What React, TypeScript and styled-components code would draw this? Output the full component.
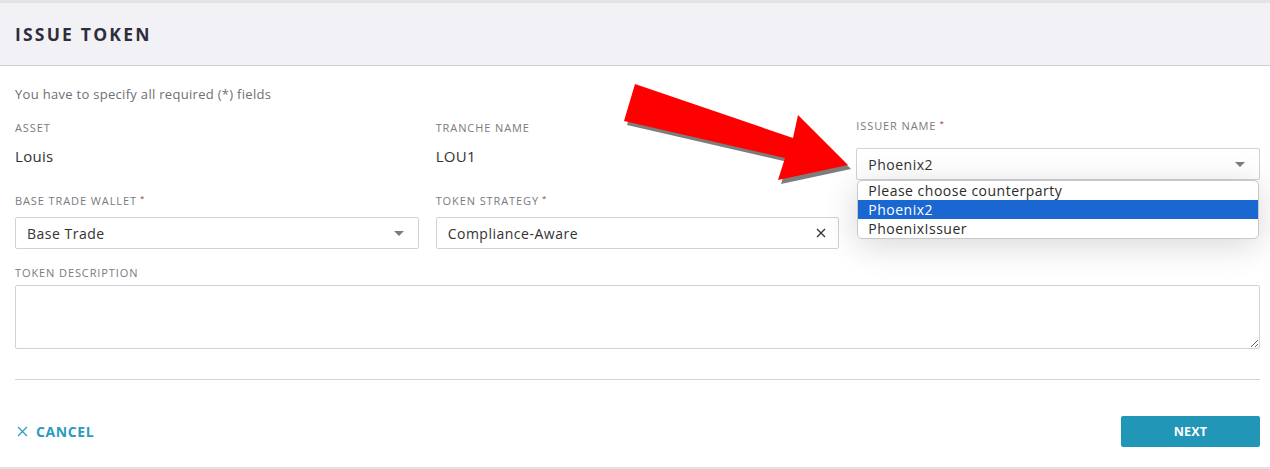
import styled, { createGlobalStyle } from "styled-components";

const GlobalStyle = createGlobalStyle`
    body {
        margin: 0;
        background: #ffffff;
        font-family: "Open Sans", "Liberation Sans", sans-serif;
        color: #333333;
    }
    * {
        box-sizing: border-box;
    }
`;

const Page = styled.div`
    position: relative;
    width: 1270px;
    height: 469px;
    overflow: hidden;
    border-top: 3px solid #e3e3e6;
    border-bottom: 2px solid #e2e2e2;
`;

const Header = styled.header`
    height: 63px;
    background: #f2f2f6;
    border-bottom: 1px solid #cfcfd3;
    display: flex;
    align-items: center;
    padding-left: 15px;
`;

const Title = styled.h1`
    margin: 0;
    font-size: 17.5px;
    font-weight: 700;
    letter-spacing: 2.2px;
    color: #2e2d3c;
`;

const Body = styled.main`
    padding: 20px 10px 0 15px;
`;

const Hint = styled.p`
    margin: 0;
    font-size: 13px;
    line-height: 16px;
    letter-spacing: 0.3px;
    color: #6f6f75;
`;

const Grid = styled.div`
    display: grid;
    grid-template-columns: repeat(3, 1fr);
    column-gap: 17px;
    align-items: start;
`;

const Field = styled.div<{ $top: number }>`
    display: flex;
    flex-direction: column;
    margin-top: ${(p) => p.$top}px;
`;

const Wide = styled(Field)`
    grid-column: 1 / -1;
`;

const Label = styled.label<{ $gap: number }>`
    font-size: 11px;
    line-height: 14px;
    letter-spacing: 0.9px;
    text-transform: uppercase;
    color: #7a7a80;
    margin-bottom: ${(p) => p.$gap}px;
`;

const Star = styled.sup`
    color: #a33a32;
    font-size: 8px;
    margin-left: 3px;
    vertical-align: 4px;
    line-height: 0;
`;

const Value = styled.div`
    font-size: 15px;
    line-height: 20px;
    letter-spacing: 0.3px;
    color: #333;
`;

const SelectBox = styled.div`
    position: relative;
    height: 32px;
    border: 1px solid #d2d2d6;
    border-radius: 2px;
    background: #fff;
    display: flex;
    align-items: center;
    justify-content: space-between;
    padding: 0 12px 0 11px;
    font-size: 14px;
    letter-spacing: 0.5px;
    color: #333;
`;

const Caret = styled.span`
    width: 0;
    height: 0;
    border-left: 5px solid transparent;
    border-right: 5px solid transparent;
    border-top: 5px solid #7b7b80;
    margin-right: 2px;
`;

const Dropdown = styled.ul`
    position: absolute;
    top: 100%;
    left: 0;
    right: 0;
    margin: 1px 0 0;
    padding: 0;
    list-style: none;
    background: #fff;
    border: 1px solid #c8c8cc;
    border-radius: 5px;
    overflow: hidden;
    box-shadow: 0 6px 34px rgba(0, 0, 0, 0.16);
    z-index: 2;
`;

const Option = styled.li<{ $active?: boolean }>`
    height: 19px;
    line-height: 19px;
    padding-left: 10px;
    font-size: 14px;
    letter-spacing: 0.5px;
    color: ${(p) => (p.$active ? "#ffffff" : "#2b2b2b")};
    background: ${(p) => (p.$active ? "#1a67d2" : "transparent")};
`;

const TextArea = styled.textarea`
    height: 64px;
    border: 1px solid #d2d2d6;
    border-radius: 2px;
    resize: both;
    font-family: inherit;
    font-size: 14px;
`;

const Divider = styled.hr`
    margin: 30px 0 0;
    border: 0;
    border-top: 1px solid #d4d4d8;
`;

const Footer = styled.div`
    display: flex;
    align-items: center;
    justify-content: space-between;
    padding-top: 36px;
`;

const CancelButton = styled.button`
    display: flex;
    align-items: center;
    gap: 8px;
    border: 0;
    background: none;
    padding: 0 0 0 2px;
    font-family: inherit;
    font-size: 14px;
    font-weight: 700;
    letter-spacing: 0.6px;
    color: #2a9bc0;
`;

const NextButton = styled.button`
    width: 139px;
    height: 31px;
    border: 0;
    border-radius: 2px;
    background: #2196b7;
    color: #fff;
    font-family: inherit;
    font-size: 12.5px;
    font-weight: 700;
    letter-spacing: 0.2px;
`;

const Arrow = styled.svg`
    position: absolute;
    left: 600px;
    top: 67px;
    pointer-events: none;
    z-index: 3;
`;

const arrowPoints = "35,14 193,68 198,45 248,95 178,110 185,88 24,51";

function App() {
    return (
        <Page>
            <GlobalStyle />
            <Header>
                <Title>ISSUE TOKEN</Title>
            </Header>
            <Body>
                <Hint>You have to specify all required (*) fields</Hint>
                <Grid>
                    <Field $top={19}>
                        <Label $gap={11}>Asset</Label>
                        <Value>Louis</Value>
                    </Field>
                    <Field $top={19}>
                        <Label $gap={11}>Tranche name</Label>
                        <Value>LOU1</Value>
                    </Field>
                    <Field $top={17}>
                        <Label $gap={15}>
                            Issuer name<Star>*</Star>
                        </Label>
                        <SelectBox>
                            Phoenix2
                            <Caret />
                            <Dropdown>
                                <Option>Please choose counterparty</Option>
                                <Option $active>Phoenix2</Option>
                                <Option>PhoenixIssuer</Option>
                            </Dropdown>
                        </SelectBox>
                    </Field>
                    <Field $top={14}>
                        <Label $gap={9}>
                            Base trade wallet<Star>*</Star>
                        </Label>
                        <SelectBox>
                            Base Trade
                            <Caret />
                        </SelectBox>
                    </Field>
                    <Field $top={14}>
                        <Label $gap={9}>
                            Token strategy<Star>*</Star>
                        </Label>
                        <SelectBox>
                            Compliance-Aware
                            <svg width="10" height="10" viewBox="0 0 10 10">
                                <path d="M1 1L9 9M9 1L1 9" stroke="#333" strokeWidth="1.3" />
                            </svg>
                        </SelectBox>
                    </Field>
                    <div />
                    <Wide $top={17}>
                        <Label $gap={5}>Token description</Label>
                        <TextArea />
                    </Wide>
                </Grid>
                <Divider />
                <Footer>
                    <CancelButton>
                        <svg width="11" height="11" viewBox="0 0 11 11">
                            <path d="M1 1L10 10M10 1L1 10" stroke="#2a9bc0" strokeWidth="1.2" />
                        </svg>
                        CANCEL
                    </CancelButton>
                    <NextButton>NEXT</NextButton>
                </Footer>
            </Body>
            <Arrow width="280" height="130" viewBox="0 0 280 130">
                <polygon points={arrowPoints} fill="#7d7d7d" transform="translate(3 4)" />
                <polygon points={arrowPoints} fill="#ff0000" />
            </Arrow>
        </Page>
    );
}

export default App;
